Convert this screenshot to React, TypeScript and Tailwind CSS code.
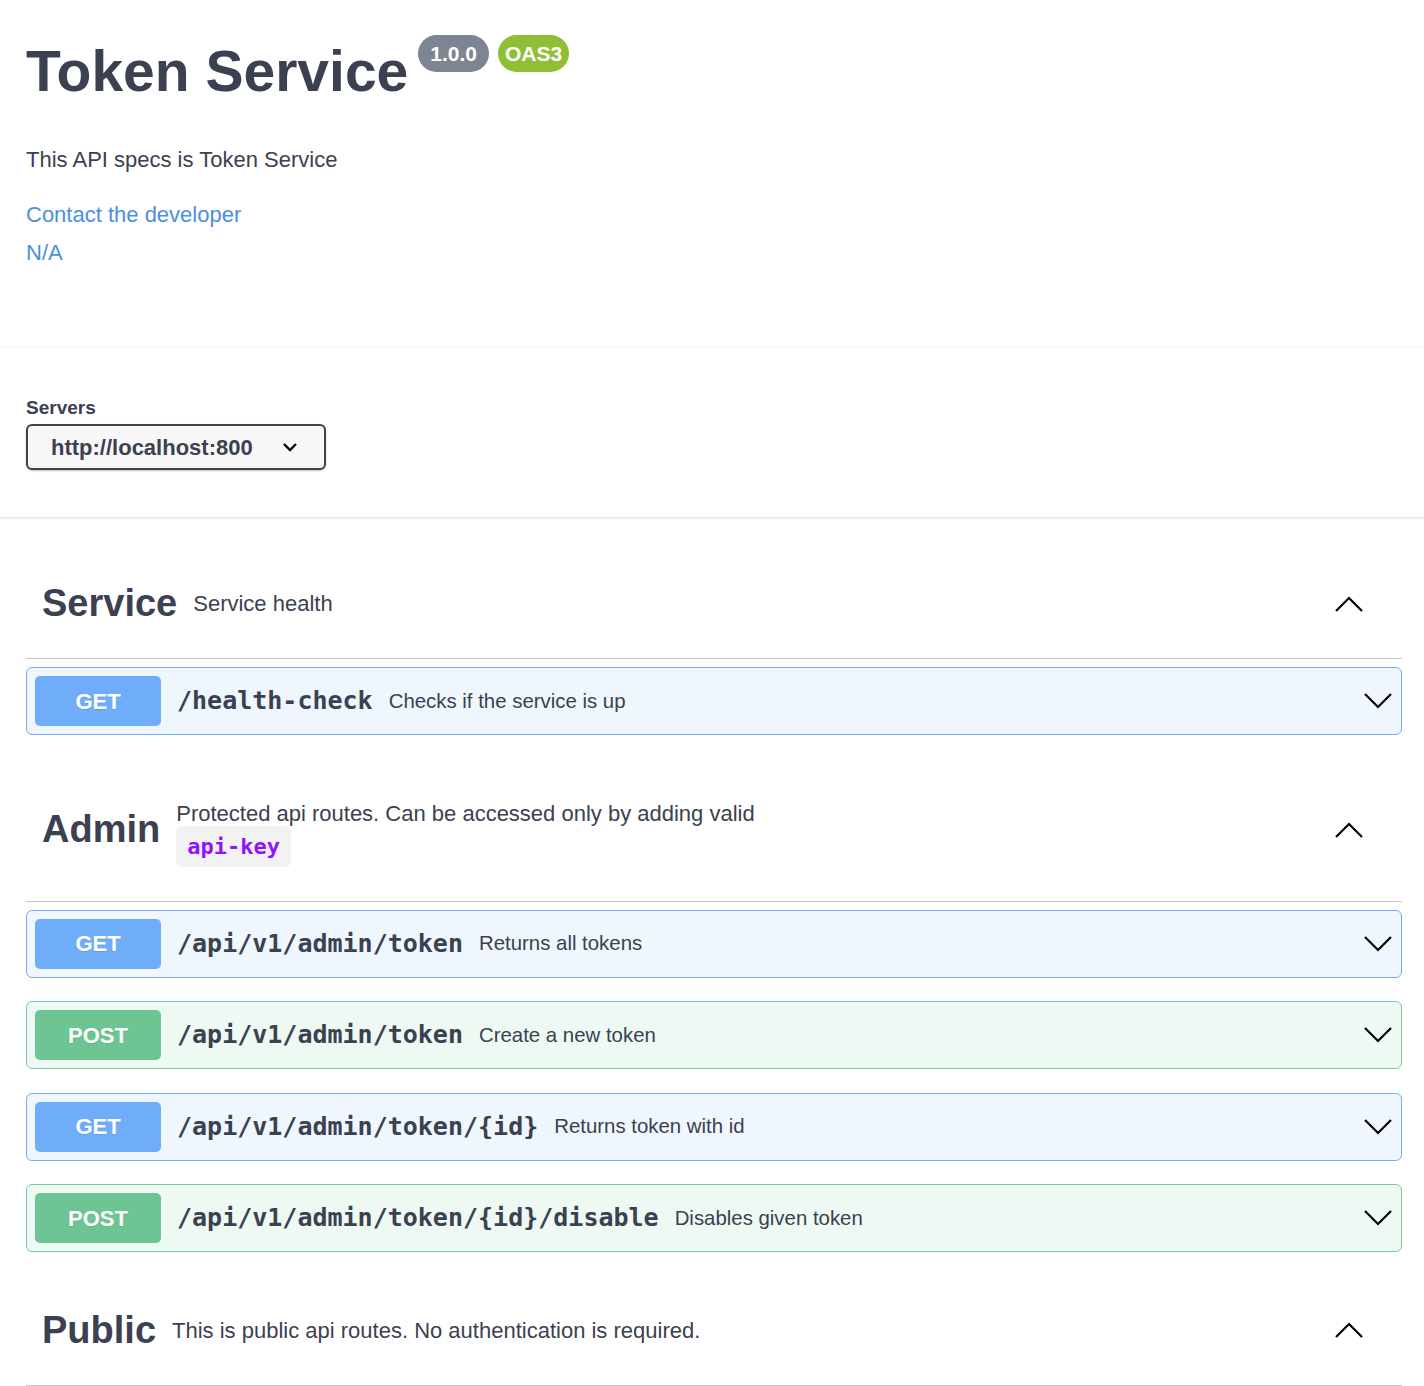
import React from 'react';

type Method = 'GET' | 'POST';

interface Operation {
  method: Method;
  path: string;
  summary: string;
}

interface Tag {
  name: string;
  description: React.ReactNode;
  operations: Operation[];
}

const methodStyles: Record<Method, { block: string; badge: string }> = {
  GET: {
    block: 'border-[#74aff6] bg-[#eff6fe]',
    badge: 'bg-[#6fadf8]',
  },
  POST: {
    block: 'border-[#7acd99] bg-[#edf9f2]',
    badge: 'bg-[#6cc592]',
  },
};

const tags: Tag[] = [
  {
    name: 'Service',
    description: 'Service health',
    operations: [{ method: 'GET', path: '/health-check', summary: 'Checks if the service is up' }],
  },
  {
    name: 'Admin',
    description: (
      <>
        Protected api routes. Can be accessed only by adding valid
        <br />
        <code className="rounded-[6px] bg-[rgba(0,0,0,0.05)] px-[11px] py-[8px] font-['DejaVu_Sans_Mono',monospace] text-[22px] font-bold text-[#9012fe]">
          api-key
        </code>
      </>
    ),
    operations: [
      { method: 'GET', path: '/api/v1/admin/token', summary: 'Returns all tokens' },
      { method: 'POST', path: '/api/v1/admin/token', summary: 'Create a new token' },
      { method: 'GET', path: '/api/v1/admin/token/{id}', summary: 'Returns token with id' },
      { method: 'POST', path: '/api/v1/admin/token/{id}/disable', summary: 'Disables given token' },
    ],
  },
  {
    name: 'Public',
    description: 'This is public api routes. No authentication is required.',
    operations: [],
  },
];

const ChevronUp = () => (
  <svg width="28" height="16" viewBox="0 0 28 16" fill="none">
    <polyline points="1,15 14,2 27,15" stroke="#000" strokeWidth="2.2" />
  </svg>
);

const ChevronDown = () => (
  <svg width="28" height="16" viewBox="0 0 28 16" fill="none">
    <polyline points="1,1 14,14 27,1" stroke="#000" strokeWidth="2.2" />
  </svg>
);

const OperationRow: React.FC<{ op: Operation }> = ({ op }) => {
  const style = methodStyles[op.method];
  return (
    <div className={`mb-[23.5px] flex items-center rounded-[6px] border p-[8px] ${style.block}`}>
      <span
        className={`flex h-[50px] w-[126px] shrink-0 items-center justify-center rounded-[5px] text-[22px] font-bold text-white [text-shadow:0_1px_0_rgba(0,0,0,0.1)] ${style.badge}`}
      >
        {op.method}
      </span>
      <span className="px-[16px] font-['DejaVu_Sans_Mono',monospace] text-[25px] font-bold text-[#3b4151]">
        {op.path}
      </span>
      <span className="flex-1 text-[20.4px] text-[#3b4151]">{op.summary}</span>
      <span className="mr-[1px]">
        <ChevronDown />
      </span>
    </div>
  );
};

const TagSection: React.FC<{ tag: Tag }> = ({ tag }) => (
  <div className="flex flex-col">
    <div className="mb-[8px] flex items-center border-b border-[rgba(59,65,81,0.3)] py-[16px] pl-[16px] pr-[39px]">
      <h3 className="text-[38px] font-bold text-[#3b4151]">{tag.name}</h3>
      <div className="flex-1 px-[16px] text-[22px] text-[#3b4151]">
        <p className="my-[22px] leading-[33px]">{tag.description}</p>
      </div>
      <ChevronUp />
    </div>
    {tag.operations.map((op, i) => (
      <OperationRow key={i} op={op} />
    ))}
  </div>
);

export default function App() {
  return (
    <div className="min-h-screen bg-white font-['Liberation_Sans',Arial,sans-serif] text-[#3b4151]">
      {/* info */}
      <div className="pl-[26px] pr-[22px] pt-[39px]">
        <div className="flex items-start">
          <h2 className="text-[57px] font-bold leading-[64px] text-[#3b4151]">Token Service</h2>
          <span className="-mt-[4px] ml-[10px] h-[37px] rounded-full bg-[#7d8492] px-[12px] text-[21px] font-bold leading-[37px] text-white">
            1.0.0
          </span>
          <span className="-mt-[4px] ml-[9px] h-[37px] rounded-full bg-[#8fbf35] px-[7px] text-[21px] font-bold leading-[37px] text-white">
            OAS3
          </span>
        </div>
        <p className="mt-[40px] text-[22px] leading-[33px]">This API specs is Token Service</p>
        <div className="mt-[22px] text-[22px] leading-[33px] text-[#4a90e2]">
          <a href="#">Contact the developer</a>
        </div>
        <div className="mt-[5px] text-[22px] leading-[33px] text-[#4a90e2]">
          <a href="#">N/A</a>
        </div>
      </div>

      {/* servers */}
      <div className="mt-[78px] border-t border-[#f5f5f5] bg-white pb-[47px] pl-[26px] pt-[48px] shadow-[0_1px_2px_0_rgba(0,0,0,0.15)]">
        <div className="text-[19px] font-bold leading-[24px]">Servers</div>
        <div className="mt-[4px] flex h-[46px] w-[300px] items-center rounded-[6px] border-2 border-[#41444e] bg-[#f7f7f7] pl-[23px] pr-[26px] shadow-[0_1px_2px_0_rgba(0,0,0,0.25)]">
          <span className="flex-1 text-[22px] font-bold">http://localhost:800</span>
          <svg width="16" height="10" viewBox="0 0 16 10" fill="none">
            <polyline points="2,2 8,8 14,2" stroke="#000" strokeWidth="2.4" />
          </svg>
        </div>
      </div>

      {/* operations */}
      <div className="pl-[26px] pr-[22px] pt-[32px]">
        {tags.map(tag => (
          <TagSection key={tag.name} tag={tag} />
        ))}
      </div>
    </div>
  );
}
